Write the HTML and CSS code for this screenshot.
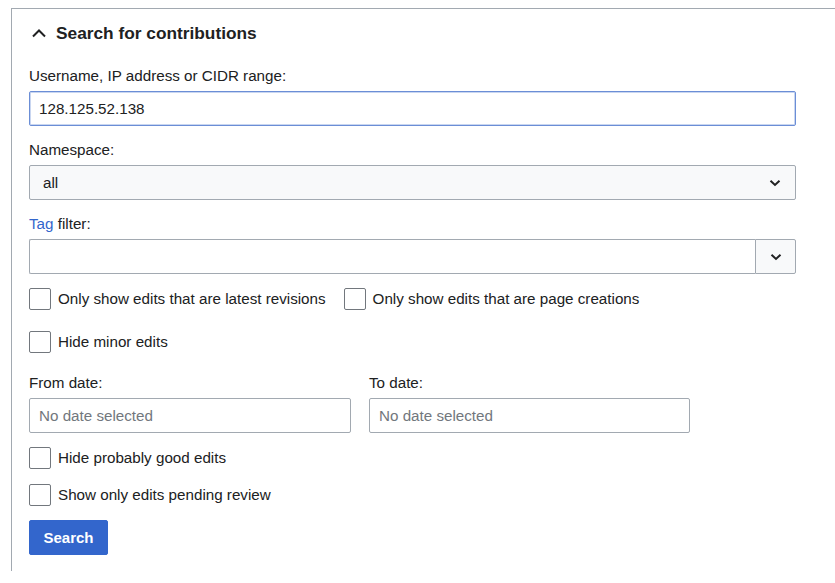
FILE: index.html
```html
<!DOCTYPE html>
<html>
<head>
<meta charset="utf-8">
<link rel="stylesheet" href="styles.css">
</head>
<body>
<div class="page">
  <form class="box">
    <div class="legend">
      <svg class="caret" width="16" height="10" viewBox="0 0 16 10"><path d="M2 8.5 L8 2.5 L14 8.5" fill="none" stroke="#202122" stroke-width="2"/></svg>
      <span>Search for contributions</span>
    </div>

    <div class="field">
      <label class="lbl">Username, IP address or CIDR range:</label>
      <div class="input focus">128.125.52.138</div>
    </div>

    <div class="field">
      <label class="lbl">Namespace:</label>
      <div class="select"><span>all</span>
        <svg class="chev" width="12" height="8" viewBox="0 0 12 8"><path d="M1.5 1.8 L6 6 L10.5 1.8" fill="none" stroke="#202122" stroke-width="2"/></svg>
      </div>
    </div>

    <div class="field">
      <label class="lbl"><a class="link">Tag</a> filter:</label>
      <div class="combo">
        <div class="combo-text"></div>
        <div class="combo-btn">
          <svg class="chev" width="12" height="8" viewBox="0 0 12 8"><path d="M1.5 1.8 L6 6 L10.5 1.8" fill="none" stroke="#202122" stroke-width="2"/></svg>
        </div>
      </div>
    </div>

    <div class="checks row1">
      <label class="check"><span class="box-cb"></span>Only show edits that are latest revisions</label>
      <label class="check"><span class="box-cb"></span>Only show edits that are page creations</label>
    </div>
    <div class="checks row2">
      <label class="check"><span class="box-cb"></span>Hide minor edits</label>
    </div>

    <div class="dates">
      <div class="date">
        <label class="lbl">From date:</label>
        <div class="input placeholder">No date selected</div>
      </div>
      <div class="date">
        <label class="lbl">To date:</label>
        <div class="input placeholder">No date selected</div>
      </div>
    </div>

    <div class="checks row3">
      <label class="check"><span class="box-cb"></span>Hide probably good edits</label>
    </div>
    <div class="checks row4">
      <label class="check"><span class="box-cb"></span>Show only edits pending review</label>
    </div>

    <button type="button" class="btn">Search</button>
  </form>
</div>
</body>
</html>
```

FILE: styles.css
```css
html, body {
  margin: 0;
  padding: 0;
  background: #fff;
  overflow: hidden;
}
body {
  font-family: "Liberation Sans", Arial, sans-serif;
  color: #202122;
  font-size: 15.2px;
}
.page {
  padding: 8px 0 0 11px;
}
.box {
  width: 860px;
  height: 563px;
  box-sizing: border-box;
  border-top: 1px solid #a2a9b1;
  border-left: 1px solid #a2a9b1;
  padding: 0 0 0 17px;
}
.legend {
  display: flex;
  align-items: center;
  height: 48px;
  margin-bottom: 9px;
  font-weight: bold;
  font-size: 17.3px;
}
.caret {
  margin-left: 2px;
  margin-right: 9px;
}
.field {
  width: 767px;
  margin-bottom: 14px;
}
.lbl {
  display: block;
  height: 20px;
  line-height: 20px;
  margin-bottom: 5px;
}
.link {
  color: #3366cc;
}
.input {
  box-sizing: border-box;
  height: 35px;
  line-height: 33px;
  border: 1px solid #a2a9b1;
  border-radius: 2px;
  padding: 0 9px;
  background: #fff;
}
.input.focus {
  border-color: #6b8ed6;
  box-shadow: inset 0 0 0 1px #c9d6f0;
}
.placeholder {
  color: #72777d;
}
.select {
  box-sizing: border-box;
  height: 35px;
  border: 1px solid #a2a9b1;
  border-radius: 2px;
  background: #f8f9fa;
  display: flex;
  align-items: center;
  justify-content: space-between;
  padding: 0 14px 0 13px;
}
.combo {
  display: flex;
  height: 35px;
}
.combo-text {
  flex: 1;
  box-sizing: border-box;
  border: 1px solid #a2a9b1;
  border-right: none;
  border-radius: 2px 0 0 2px;
}
.combo-btn {
  width: 41px;
  box-sizing: border-box;
  border: 1px solid #a2a9b1;
  border-radius: 0 2px 2px 0;
  background: #f8f9fa;
  display: flex;
  align-items: center;
  justify-content: center;
}
.checks {
  display: flex;
  gap: 18px;
  height: 22px;
}
.row1 { margin-bottom: 21px; }
.row2 { margin-bottom: 20px; }
.row3 { margin-bottom: 15px; }
.row4 { margin-bottom: 14px; }
.check {
  display: flex;
  align-items: center;
  line-height: 22px;
}
.box-cb {
  box-sizing: border-box;
  width: 22px;
  height: 22px;
  border: 1px solid #72777d;
  border-radius: 2px;
  margin-right: 7px;
  background: #fff;
}
.dates {
  display: flex;
  gap: 18px;
  margin-bottom: 14px;
}
.date:first-child { width: 322px; }
.date:last-child { width: 321px; }
.btn {
  font-family: "Liberation Sans", Arial, sans-serif;
  font-weight: bold;
  font-size: 15px;
  color: #fff;
  background: #3366cc;
  border: 1px solid #3366cc;
  border-radius: 2px;
  height: 35px;
  width: 79px;
  padding: 0;
}
```
